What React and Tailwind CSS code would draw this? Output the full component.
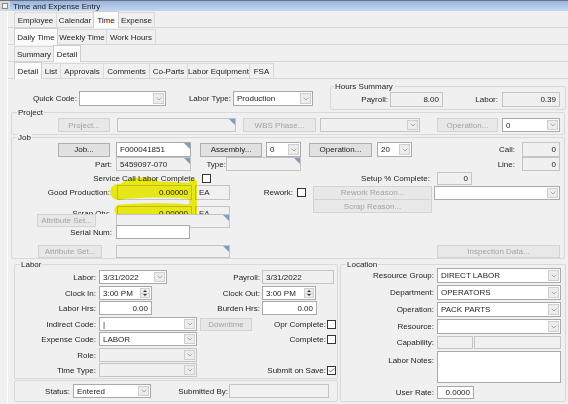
import React from "react";
import { ChevronDown, Check } from "lucide-react";

const tabRows = [
  {
    active: "Time",
    tabs: [
      ["Employee", "w-[43px]"],
      ["Calendar", "w-[38px]"],
      ["Time", "w-[26px]"],
      ["Expense", "w-[37px]"],
    ],
  },
  {
    active: "Daily Time",
    tabs: [
      ["Daily Time", "w-[44px]"],
      ["Weekly Time", "w-[50px]"],
      ["Work Hours", "w-[50px]"],
    ],
  },
  {
    active: "Detail",
    tabs: [
      ["Summary", "w-[40px]"],
      ["Detail", "w-[28px]"],
    ],
  },
  {
    active: "Detail",
    tabs: [
      ["Detail", "w-[28px]"],
      ["List", "w-[20px]"],
      ["Approvals", "w-[44px]"],
      ["Comments", "w-[47px]"],
      ["Co-Parts", "w-[39px]"],
      ["Labor Equipment", "w-[63px]"],
      ["FSA", "w-[25px]"],
    ],
  },
];

function TabStrip({ tabs, active }) {
  return (
    <div className="flex h-[17px] shrink-0 items-end border-b border-[#d5d5d5] pl-[6px]">
      {tabs.map(([name, w]) => {
        const on = name === active;
        return (
          <div
            key={name}
            className={`${w} -ml-px flex shrink-0 items-center justify-center border border-b-0 first:ml-0 ${
              on
                ? "relative z-[1] -mb-px h-[17px] border-[#cfcfcf] bg-[#fbfbfb]"
                : "h-[15px] border-[#dadada] bg-[#f0f0f0]"
            }`}
          >
            {name}
          </div>
        );
      })}
    </div>
  );
}

function Label({ className = "", children }) {
  return (
    <div className={`shrink-0 whitespace-nowrap text-right ${className}`}>
      {children}
    </div>
  );
}

function Field({ className = "", value = "", gray, right, tri }) {
  return (
    <div
      className={`relative flex shrink-0 items-center overflow-hidden whitespace-nowrap border px-[3px] ${
        gray ? "border-[#c4c4c4] bg-[#f0f0f0]" : "border-[#a9a9a9] bg-white"
      } ${right ? "justify-end" : ""} ${className}`}
    >
      {value}
      {tri && (
        <span className="absolute right-0 top-0 h-0 w-0 border-l-[6px] border-t-[6px] border-l-transparent border-t-[#7e9bc7]" />
      )}
    </div>
  );
}

function Combo({ className = "", value = "", gray }) {
  return (
    <div
      className={`flex shrink-0 border ${
        gray ? "border-[#c4c4c4] bg-[#f0f0f0]" : "border-[#a9a9a9] bg-white"
      } ${className}`}
    >
      <div className="flex flex-1 items-center overflow-hidden whitespace-nowrap px-[3px]">
        {value}
      </div>
      <div className="my-[1px] mr-[1px] flex w-[11px] items-center justify-center border border-[#cfcfcf] bg-[#ececec]">
        <ChevronDown size={8} strokeWidth={1.6} color="#6d6d6d" />
      </div>
    </div>
  );
}

function Spin({ className = "", value }) {
  return (
    <div className={`flex shrink-0 border border-[#a9a9a9] bg-white ${className}`}>
      <div className="flex flex-1 items-center px-[3px]">{value}</div>
      <div className="my-[1px] mr-[1px] flex w-[10px] flex-col border border-[#cfcfcf] bg-[#ececec]">
        <div className="flex flex-1 items-center justify-center border-b border-[#cfcfcf]">
          <span className="block h-0 w-0 border-x-[2px] border-b-[2px] border-x-transparent border-b-[#333]" />
        </div>
        <div className="flex flex-1 items-center justify-center">
          <span className="block h-0 w-0 border-x-[2px] border-t-[2px] border-x-transparent border-t-[#333]" />
        </div>
      </div>
    </div>
  );
}

function Btn({ className = "", off, children }) {
  return (
    <button
      type="button"
      className={`flex shrink-0 items-center justify-center overflow-hidden whitespace-nowrap border ${
        off
          ? "border-[#d3d3d3] bg-[#e8e8e8] text-[#a3a3a3]"
          : "border-[#adadad] bg-[#e1e1e1] text-[#222]"
      } ${className}`}
    >
      {children}
    </button>
  );
}

function Box({ className = "", checked }) {
  return (
    <div
      className={`flex h-[9px] w-[9px] shrink-0 items-center justify-center border border-[#333] bg-white ${className}`}
    >
      {checked && <Check size={7} strokeWidth={2.2} color="#333" />}
    </div>
  );
}

function Group({ className = "", title, children }) {
  return (
    <div className={`shrink-0 rounded-[2px] border border-[#d9d9d9] ${className}`}>
      <div className="-mt-[5px] ml-[5px] w-fit bg-[#f0f0f0] px-[1px] leading-[9px]">
        {title}
      </div>
      {children}
    </div>
  );
}

export default function App() {
  return (
    <div className="relative h-[404px] w-[568px] overflow-hidden bg-[#f0f0f0] font-['Liberation_Sans',Arial,sans-serif] text-[8px] leading-[9px] text-[#222]">
      {/* title bar */}
      <div className="flex h-[11px] border-t border-[#6b7077]">
        <div className="flex w-[10px] items-center justify-center bg-[#d9d9d9]">
          <div className="h-[6px] w-[6px] border border-[#8a8a8a] bg-[#f4f4f4]" />
        </div>
        <div className="flex flex-1 items-center bg-gradient-to-b from-[#98b6e2] to-[#c5d6ef] pl-[3px] text-[#1c1c1c]">
          Time and Expense Entry
        </div>
      </div>

      <div className="flex h-[393px]">
        <div className="w-[7px] shrink-0" />
        <div className="w-px shrink-0 bg-white" />
        <div className="flex w-[560px] flex-col">
          {tabRows.map((r, i) => (
            <TabStrip key={i} tabs={r.tabs} active={r.active} />
          ))}

          {/* quick code + hours summary */}
          <div className="flex h-[33px] shrink-0">
            <div className="mt-[12px] flex h-[15px] items-center">
              <Label className="w-[69px]">Quick Code:</Label>
              <Combo className="ml-[2px] h-[15px] w-[87px]" />
              <Label className="w-[65px]">Labor Type:</Label>
              <Combo className="ml-[2px] h-[15px] w-[80px]" value="Production" />
            </div>
            <div className="ml-[17px] mt-[7px] h-[24px] w-[236px] rounded-[2px] border border-[#d9d9d9]">
              <div className="-mt-[5px] ml-[3px] w-fit bg-[#f0f0f0] px-[1px]">Hours Summary</div>
              <div className="mt-[1px] flex h-[15px] items-center">
                <Label className="w-[57px]">Payroll:</Label>
                <Field className="ml-[2px] h-[15px] w-[53px]" gray right value="8.00" />
                <Label className="w-[55px]">Labor:</Label>
                <Field className="ml-[4px] h-[15px] w-[58px]" gray right value="0.39" />
              </div>
            </div>
          </div>

          {/* project */}
          <Group className="ml-[3px] w-[554px]" title="Project">
            <div className="mt-[1px] flex h-[14px] items-center">
              <Btn off className="ml-[46px] h-[14px] w-[52px]">Project...</Btn>
              <Field className="ml-[7px] h-[14px] w-[119px]" gray tri />
              <Btn off className="ml-[7px] h-[14px] w-[73px]">WBS Phase...</Btn>
              <Combo className="ml-[4px] h-[14px] w-[100px]" gray />
              <Btn off className="ml-[17px] h-[14px] w-[61px]">Operation...</Btn>
              <Combo className="ml-[4px] h-[14px] w-[58px]" value="0" />
            </div>
            <div className="h-[2px]" />
          </Group>

          {/* job */}
          <Group className="ml-[3px] mt-[2px] w-[554px]" title="Job">
            <div className="flex h-[15px] items-center">
              <Btn className="ml-[46px] h-[14px] w-[52px]">Job...</Btn>
              <Field className="ml-[6px] h-[15px] w-[75px]" tri value="F000041851" />
              <Btn className="ml-[9px] h-[14px] w-[62px]">Assembly...</Btn>
              <Combo className="ml-[4px] h-[15px] w-[35px]" value="0" />
              <Btn className="ml-[8px] h-[14px] w-[63px]">Operation...</Btn>
              <Combo className="ml-[5px] h-[15px] w-[35px]" value="20" />
              <Label className="w-[103px]">Call:</Label>
              <Field className="ml-[7px] h-[15px] w-[38px]" gray right value="0" />
            </div>
            <div className="flex h-[14px] items-center">
              <Label className="w-[100px]">Part:</Label>
              <Field className="ml-[4px] h-[14px] w-[75px]" gray tri value="5459097-070" />
              <Label className="ml-[10px] w-[25px] text-left">Type:</Label>
              <Field className="h-[14px] w-[75px]" gray tri />
              <Label className="w-[214px]">Line:</Label>
              <Field className="ml-[7px] h-[14px] w-[38px]" gray right value="0" />
            </div>
            <div className="flex h-[14px] items-center">
              <Label className="w-[183px]">Service Call Labor Complete</Label>
              <Box className="ml-[7px]" />
              <Label className="w-[219px]">Setup % Complete:</Label>
              <Field className="ml-[7px] h-[13px] w-[35px]" gray right value="0" />
            </div>
            <div className="flex h-[15px] items-center">
              <Label className="w-[98px]">Good Production:</Label>
              <Field className="ml-[7px] h-[15px] w-[75px]" gray right value="0.00000" />
              <Field className="ml-[3px] h-[15px] w-[35px]" gray value="EA" />
              <Label className="w-[63px]">Rework:</Label>
              <Box className="ml-[4px]" />
              <Btn off className="ml-[7px] h-[14px] w-[119px]">Rework Reason...</Btn>
              <Combo className="ml-[2px] h-[14px] w-[126px]" />
            </div>
            <div className="mt-[6px] flex h-[15px] items-center">
              <Label className="w-[98px]">Scrap Qty:</Label>
              <Field className="ml-[7px] h-[15px] w-[75px]" gray right value="0.00000" />
              <Field className="ml-[3px] h-[15px] w-[35px]" gray value="EA" />
              <Btn off className="-mt-[7px] ml-[83px] h-[14px] w-[119px] self-start">
                Scrap Reason...
              </Btn>
            </div>
            <div className="relative z-[1] -mt-[7px] flex w-fit flex-col bg-[#f0f0f0] pr-[2px]">
              <div className="flex h-[14px] items-center">
                <Btn off className="ml-[25px] h-[13px] w-[59px] self-start">Attribute Set...</Btn>
                <Field className="ml-[20px] h-[14px] w-[114px]" gray tri />
              </div>
              <div className="-mt-[3px] flex h-[14px] items-center">
                <Label className="w-[100px]">Serial Num:</Label>
                <Field className="ml-[4px] h-[14px] w-[74px]" />
              </div>
            </div>
            <div className="mt-[6px] flex h-[13px] items-center">
              <Btn off className="ml-[26px] h-[13px] w-[64px]">Attribute Set...</Btn>
              <Field className="ml-[14px] h-[13px] w-[114px]" gray tri />
              <Btn off className="ml-[207px] h-[13px] w-[123px]">Inspection Data...</Btn>
            </div>
          </Group>

          {/* labor + location */}
          <div className="mt-[5px] flex">
            <div className="ml-[6px] flex w-[324px] shrink-0 flex-col">
              <Group className="h-[115px]" title="Labor">
                <div className="mt-[1px] flex h-[14px] items-center">
                  <Label className="w-[81px]">Labor:</Label>
                  <Combo className="ml-[3px] h-[14px] w-[68px]" value="3/31/2022" />
                  <Label className="w-[93px]">Payroll:</Label>
                  <Field className="ml-[2px] h-[14px] w-[72px]" gray value="3/31/2022" />
                </div>
                <div className="mt-[2px] flex h-[14px] items-center">
                  <Label className="w-[81px]">Clock In:</Label>
                  <Spin className="ml-[3px] h-[14px] w-[53px]" value="3:00 PM" />
                  <Label className="w-[108px]">Clock Out:</Label>
                  <Spin className="ml-[2px] h-[14px] w-[54px]" value="3:00 PM" />
                </div>
                <div className="mt-[1px] flex h-[14px] items-center">
                  <Label className="w-[81px]">Labor Hrs:</Label>
                  <Field className="ml-[3px] h-[14px] w-[53px]" right value="0.00" />
                  <Label className="w-[108px]">Burden Hrs:</Label>
                  <Field className="ml-[2px] h-[14px] w-[55px]" right value="0.00" />
                </div>
                <div className="mt-[2px] flex h-[14px] items-center">
                  <Label className="w-[81px]">Indirect Code:</Label>
                  <Combo className="ml-[3px] h-[14px] w-[98px]" value="|" />
                  <Btn off className="ml-[3px] h-[13px] w-[52px]">Downtime</Btn>
                  <Label className="w-[74px]">Opr Complete:</Label>
                  <Box className="ml-[1px]" />
                </div>
                <div className="mt-[1px] flex h-[14px] items-center">
                  <Label className="w-[81px]">Expense Code:</Label>
                  <Combo className="ml-[3px] h-[14px] w-[98px]" value="LABOR" />
                  <Label className="w-[129px]">Complete:</Label>
                  <Box className="ml-[1px]" />
                </div>
                <div className="mt-[2px] flex h-[14px] items-center">
                  <Label className="w-[81px]">Role:</Label>
                  <Combo className="ml-[3px] h-[14px] w-[98px]" gray />
                </div>
                <div className="mt-[1px] flex h-[14px] items-center">
                  <Label className="w-[81px]">Time Type:</Label>
                  <Combo className="ml-[3px] h-[14px] w-[98px]" gray />
                  <Label className="w-[129px]">Submit on Save:</Label>
                  <Box className="ml-[1px]" checked />
                </div>
              </Group>
              <div className="mt-[1px] flex h-[22px] items-center rounded-[2px] border border-[#d9d9d9]">
                <Label className="w-[55px]">Status:</Label>
                <Combo className="ml-[3px] h-[14px] w-[78px]" value="Entered" />
                <Label className="w-[77px]">Submitted By:</Label>
                <Field className="ml-[1px] h-[14px] w-[100px]" gray />
              </div>
            </div>

            <Group className="ml-[2px] h-[138px] w-[226px]" title="Location">
              <div className="-mt-[1px] flex h-[15px] items-center">
                <Label className="w-[93px]">Resource Group:</Label>
                <Combo className="ml-[3px] h-[15px] w-[124px]" value="DIRECT LABOR" />
              </div>
              <div className="mt-[2px] flex h-[15px] items-center">
                <Label className="w-[93px]">Department:</Label>
                <Combo className="ml-[3px] h-[15px] w-[124px]" value="OPERATORS" />
              </div>
              <div className="mt-[2px] flex h-[15px] items-center">
                <Label className="w-[93px]">Operation:</Label>
                <Combo className="ml-[3px] h-[15px] w-[124px]" value="PACK PARTS" />
              </div>
              <div className="mt-[2px] flex h-[15px] items-center">
                <Label className="w-[93px]">Resource:</Label>
                <Combo className="ml-[3px] h-[15px] w-[124px]" />
              </div>
              <div className="mt-[2px] flex h-[13px] items-center">
                <Label className="w-[93px]">Capability:</Label>
                <Field className="ml-[3px] h-[13px] w-[36px]" gray />
                <Field className="ml-[1px] h-[13px] w-[87px]" gray />
              </div>
              <div className="mt-[2px] flex h-[32px]">
                <Label className="w-[93px] pt-[5px]">Labor Notes:</Label>
                <div className="ml-[3px] h-[32px] w-[124px] border border-[#a9a9a9] bg-white" />
              </div>
              <div className="mt-[3px] flex h-[13px] items-center">
                <Label className="w-[93px]">User Rate:</Label>
                <Field className="ml-[3px] h-[13px] w-[37px]" right value="0.0000" />
              </div>
            </Group>
          </div>
        </div>
      </div>

      {/* marker highlight over the production quantities */}
      <svg
        className="pointer-events-none absolute left-0 top-0 mix-blend-multiply"
        width="568"
        height="404"
        viewBox="0 0 568 404"
      >
        <g fill="none" stroke="#f6f600" strokeLinecap="round" opacity="0.9">
          <path d="M118 192 C 140 189, 170 189, 189 191" strokeWidth="16" />
          <path d="M124 185 C 132 179, 148 179, 158 184" strokeWidth="6" />
          <path d="M120 210 C 145 208, 170 208, 191 210" strokeWidth="11" />
          <path d="M193 183 L 193 215" strokeWidth="8" />
        </g>
      </svg>
    </div>
  );
}
